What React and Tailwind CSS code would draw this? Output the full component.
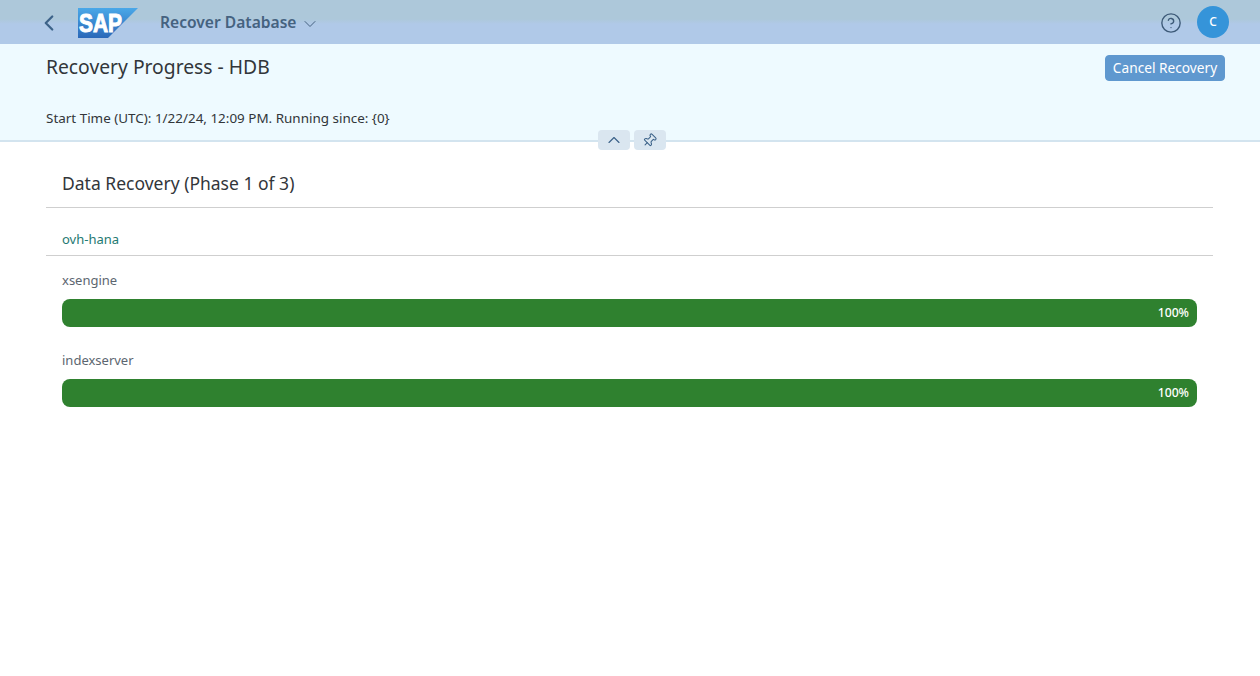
import { ChevronDown, ChevronLeft, ChevronUp, CircleHelp, Pin } from "lucide-react";

function SapLogo() {
  return (
    <svg width="60" height="30" viewBox="0 0 60 30" className="block">
      <defs>
        <linearGradient id="sapBlue" x1="0" y1="0" x2="0" y2="1">
          <stop offset="0" stopColor="#4aa8e8" />
          <stop offset="1" stopColor="#2a68b8" />
        </linearGradient>
      </defs>
      <polygon points="0,0 60,0 30,30 0,30" fill="url(#sapBlue)" />
      <text
        x="1"
        y="23.5"
        fill="#fff"
        stroke="#fff"
        strokeWidth="1"
        fontFamily="Liberation Sans, sans-serif"
        fontSize="25"
        fontWeight="700"
        textLength="43"
        lengthAdjust="spacingAndGlyphs"
      >
        SAP
      </text>
    </svg>
  );
}

function ProgressRow({ name }) {
  return (
    <div className="pb-[12px]">
      <div className="h-[20px] -translate-y-px text-[13px] leading-[20px] text-[#5c6670]">{name}</div>
      <div className="mt-[8px] h-[28px] rounded-[8px] bg-[#2f812f] flex items-center justify-end pr-[8px] text-[12.2px] font-medium text-white">
        100%
      </div>
    </div>
  );
}

export default function App() {
  return (
    <div className="min-h-[676px] bg-white font-['Noto_Sans',sans-serif] text-[#32363a]">
      <header className="h-[44px] bg-[linear-gradient(#adc8da_0,#adc8da_19px,#b0c9e8_24px)] flex items-center pl-[36px] pr-[31px]">
        <ChevronLeft size={26} strokeWidth={2.1} className="mt-[1px] text-[#3d6389]" />
        <div className="ml-[16px] mt-[1px]"><SapLogo /></div>
        <div className="ml-[22px] mt-[2px] text-[15.6px] font-semibold text-[#456280]">Recover Database</div>
        <ChevronDown size={20} strokeWidth={1.2} className="ml-[4px] mt-[3px] text-[#456280]" />
        <CircleHelp size={22} strokeWidth={1.5} className="ml-auto mr-[1px] mt-[1px] text-[#3d5a78]" />
        <div className="ml-[14px] w-[32px] h-[32px] rounded-full bg-[#3594d9] text-white text-[12px] font-medium flex items-center justify-center">
          C
        </div>
      </header>

      <section className="relative h-[98px] bg-[#eefaff] border-b-2 border-[#d3e4ef] pl-[46px] pr-[35px]">
        <div className="flex items-start justify-between">
          <h1 className="mt-[10px] text-[19.3px] leading-[26px] text-[#32363a]">Recovery Progress - HDB</h1>
          <button className="mt-[11px] h-[26px] w-[120px] rounded-[4px] border border-[#5f98cf] bg-[#5f98cf] text-[13.7px] text-white">
            Cancel Recovery
          </button>
        </div>
        <p className="mt-[27px] text-[13.45px] leading-[20px] text-[#32363a]">
          Start Time (UTC): 1/22/24, 12:09 PM. Running since: {"{0}"}
        </p>
        <div className="absolute left-[598px] top-[86px] flex gap-[4px]">
          <div className="w-[32px] h-[20px] rounded-[4px] bg-[#dae6f0] flex items-center justify-center text-[#3d6389]">
            <ChevronUp size={20} strokeWidth={1.4} />
          </div>
          <div className="w-[32px] h-[20px] rounded-[4px] bg-[#dae6f0] flex items-center justify-center text-[#3d6389]">
            <Pin size={15} strokeWidth={1.7} className="rotate-45 -translate-x-px" />
          </div>
        </div>
      </section>

      <main className="pl-[46px] pr-[47px]">
        <h2 className="h-[66px] border-b border-[#cfcfcf] pl-[16px] pt-[28px] text-[17.5px] leading-[26px] text-[#32363a]">
          Data Recovery (Phase 1 of 3)
        </h2>
        <div className="h-[48px] border-b border-[#cfcfcf] pl-[16px] pt-[21px] text-[13px] leading-[20px] text-[#1f7a72]">
          ovh-hana
        </div>
        <div className="px-[16px] pt-[15px] flex flex-col gap-[12px]">
          <ProgressRow name="xsengine" />
          <ProgressRow name="indexserver" />
        </div>
      </main>
    </div>
  );
}
